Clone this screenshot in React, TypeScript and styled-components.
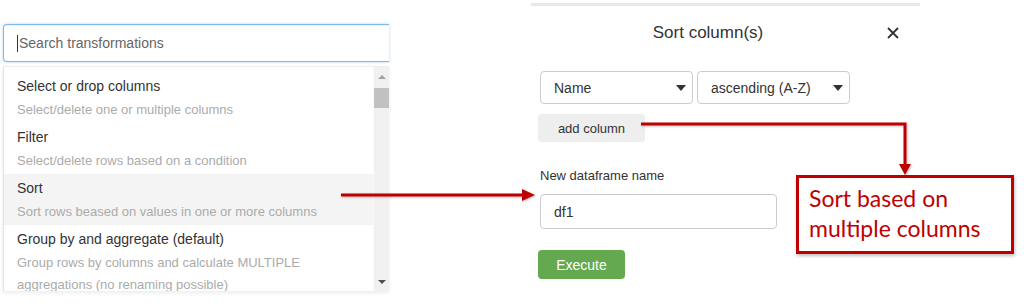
import React from 'react';
import styled, { createGlobalStyle } from 'styled-components';

const GlobalStyle = createGlobalStyle`
  html, body {
    margin: 0;
    padding: 0;
    background: #ffffff;
  }
  body {
    font-family: 'Liberation Sans', Arial, sans-serif;
    color: #333333;
  }
`;

type Transformation = { title: string; description: string[]; active?: boolean };

const transformations: Transformation[] = [
  { title: 'Select or drop columns', description: ['Select/delete one or multiple columns'] },
  { title: 'Filter', description: ['Select/delete rows based on a condition'] },
  { title: 'Sort', description: ['Sort rows beased on values in one or more columns'], active: true },
  {
    title: 'Group by and aggregate (default)',
    description: ['Group rows by columns and calculate MULTIPLE', 'aggregations (no renaming possible)'],
  },
];

const Caret = () => (
  <svg width="10" height="6" viewBox="0 0 10 6">
    <path d="M0 0 L10 0 L5 6 Z" fill="#333" />
  </svg>
);

const App: React.FC = () => {
  return (
    <>
      <GlobalStyle />
      <Page>
        <LeftPanel>
          <SearchBox>
            <TextCaret />
            Search transformations
          </SearchBox>
          <Dropdown>
            <List>
              {transformations.map((t) => (
                <Item key={t.title} $active={t.active}>
                  <ItemTitle>{t.title}</ItemTitle>
                  {t.description.map((d) => (
                    <ItemDesc key={d}>{d}</ItemDesc>
                  ))}
                </Item>
              ))}
            </List>
            <Scrollbar>
              <ScrollArrow $up />
              <Thumb />
              <Spacer />
              <ScrollArrow />
            </Scrollbar>
          </Dropdown>
        </LeftPanel>

        <Modal>
          <Header>
            <Title>Sort column(s)</Title>
            <CloseBtn>
              <svg width="12" height="12" viewBox="0 0 12 12">
                <path d="M1 1 L11 11 M11 1 L1 11" stroke="#333" strokeWidth="1.8" />
              </svg>
            </CloseBtn>
          </Header>
          <Body>
            <SelectRow>
              <Select>
                Name
                <Caret />
              </Select>
              <Select>
                ascending (A-Z)
                <Caret />
              </Select>
            </SelectRow>
            <GreyBtn>add column</GreyBtn>
            <Label>New dataframe name</Label>
            <TextInput>df1</TextInput>
            <ExecuteBtn>Execute</ExecuteBtn>
          </Body>
        </Modal>

        <Callout>
          Sort based on
          <br />
          multiple columns
        </Callout>

        <Arrows width="1024" height="308" viewBox="0 0 1024 308">
          <defs>
            <filter id="sh" x="-10%" y="-50%" width="120%" height="200%">
              <feDropShadow dx="1" dy="1" stdDeviation="1" floodColor="#000" floodOpacity="0.25" />
            </filter>
          </defs>
          <g filter="url(#sh)" fill="#c00000" stroke="#c00000">
            <path d="M641 124 H905 V165" fill="none" strokeWidth="3" />
            <path d="M899 164 L911 164 L905 175 Z" strokeWidth="0" />
            <path d="M341 195 H524" fill="none" strokeWidth="3" />
            <path d="M522 189 L535 195 L522 201 Z" strokeWidth="0" />
          </g>
        </Arrows>
      </Page>
    </>
  );
};

export default App;

const Page = styled.div`
  position: relative;
  width: 1024px;
  height: 308px;
  display: flex;
  align-items: flex-start;
  overflow: hidden;
`;

const LeftPanel = styled.div`
  margin: 24px 0 0 3px;
  width: 386px;
  display: flex;
  flex-direction: column;
`;

const SearchBox = styled.div`
  height: 38px;
  box-sizing: border-box;
  border: 1px solid #7db9ea;
  border-right: none;
  border-radius: 4px 0 0 4px;
  box-shadow: inset 0 1px 1px rgba(0, 0, 0, 0.05), 0 0 3px rgba(102, 175, 233, 0.5);
  display: flex;
  align-items: center;
  padding-left: 13px;
  font-size: 14px;
  color: #666;
`;

const TextCaret = styled.span`
  width: 1px;
  height: 17px;
  background: #333;
  margin-right: 1px;
`;

const Dropdown = styled.div`
  margin-top: 4px;
  height: 224px;
  display: flex;
  border-left: 1px solid #e2e2e2;
  border-top: 1px solid #eeeeee;
  box-shadow: 0 2px 4px rgba(0, 0, 0, 0.08);
  overflow: hidden;
`;

const List = styled.div`
  flex: 1;
  padding-top: 5px;
`;

const Item = styled.div<{ $active?: boolean }>`
  padding: 4px 13px 2px;
  background: ${(p) => (p.$active ? '#f4f4f4' : 'transparent')};
`;

const ItemTitle = styled.div`
  font-size: 14px;
  line-height: 20px;
  margin-bottom: 3px;
  color: #333;
`;

const ItemDesc = styled.div`
  font-size: 13px;
  line-height: 22px;
  color: #ababab;
`;

const Scrollbar = styled.div`
  width: 15px;
  background: #f1f1f1;
  border-left: 1px solid #fafafa;
  display: flex;
  flex-direction: column;
  align-items: center;
  padding: 8px 0 7px;
`;

const ScrollArrow = styled.div<{ $up?: boolean }>`
  width: 0;
  height: 0;
  border-left: 4px solid transparent;
  border-right: 4px solid transparent;
  ${(p) => (p.$up ? 'border-bottom: 4px solid #a3a3a3;' : 'border-top: 4px solid #505050;')}
`;

const Thumb = styled.div`
  width: 15px;
  height: 20px;
  margin-top: 9px;
  background: #c1c1c1;
`;

const Spacer = styled.div`
  flex: 1;
`;

const Modal = styled.div`
  margin: 3px 0 0 142px;
  width: 389px;
  border-top: 3px solid #e4e9ed;
`;

const Header = styled.div`
  height: 54px;
  display: grid;
  grid-template-columns: 1fr auto;
  align-items: center;
`;

const Title = styled.div`
  text-align: center;
  font-size: 17px;
  color: #333;
`;

const CloseBtn = styled.div`
  width: 12px;
  height: 12px;
  margin: 0 21px 0 2px;
  display: flex;
`;

const Body = styled.div`
  padding: 11px 0 0 9px;
  display: flex;
  flex-direction: column;
  align-items: flex-start;
`;

const SelectRow = styled.div`
  display: flex;
  gap: 4px;
`;

const Select = styled.div`
  width: 153px;
  height: 33px;
  box-sizing: border-box;
  border: 1px solid #cccccc;
  border-radius: 4px;
  display: flex;
  align-items: center;
  justify-content: space-between;
  padding: 0 6px 0 13px;
  font-size: 14px;
  color: #333;
`;

const GreyBtn = styled.div`
  margin: 10px 0 0 -2px;
  width: 107px;
  height: 28px;
  border-radius: 4px;
  background: #eeeeee;
  display: flex;
  align-items: center;
  justify-content: center;
  font-size: 13px;
  color: #333;
`;

const Label = styled.div`
  margin-top: 26px;
  font-size: 13px;
  line-height: 16px;
  color: #333;
`;

const TextInput = styled.div`
  margin-top: 10px;
  width: 237px;
  height: 35px;
  box-sizing: border-box;
  border: 1px solid #cccccc;
  border-radius: 4px;
  display: flex;
  align-items: center;
  padding-left: 13px;
  font-size: 14px;
  color: #333;
`;

const ExecuteBtn = styled.div`
  margin: 21px 0 0 -2px;
  width: 87px;
  height: 29px;
  border-radius: 4px;
  background: #64a94f;
  color: #ffffff;
  display: flex;
  align-items: center;
  justify-content: center;
  font-size: 14px;
`;

const Callout = styled.div`
  position: absolute;
  left: 796px;
  top: 175px;
  width: 218px;
  height: 79px;
  box-sizing: border-box;
  border: 3px solid #c00000;
  background: #ffffff;
  box-shadow: 1px 2px 3px rgba(0, 0, 0, 0.25);
  padding: 5px 0 0 10px;
  font-family: Lato, 'Open Sans', sans-serif;
  font-size: 23px;
  line-height: 30px;
  color: #c00000;
`;

const Arrows = styled.svg`
  position: absolute;
  left: 0;
  top: 0;
  pointer-events: none;
`;
